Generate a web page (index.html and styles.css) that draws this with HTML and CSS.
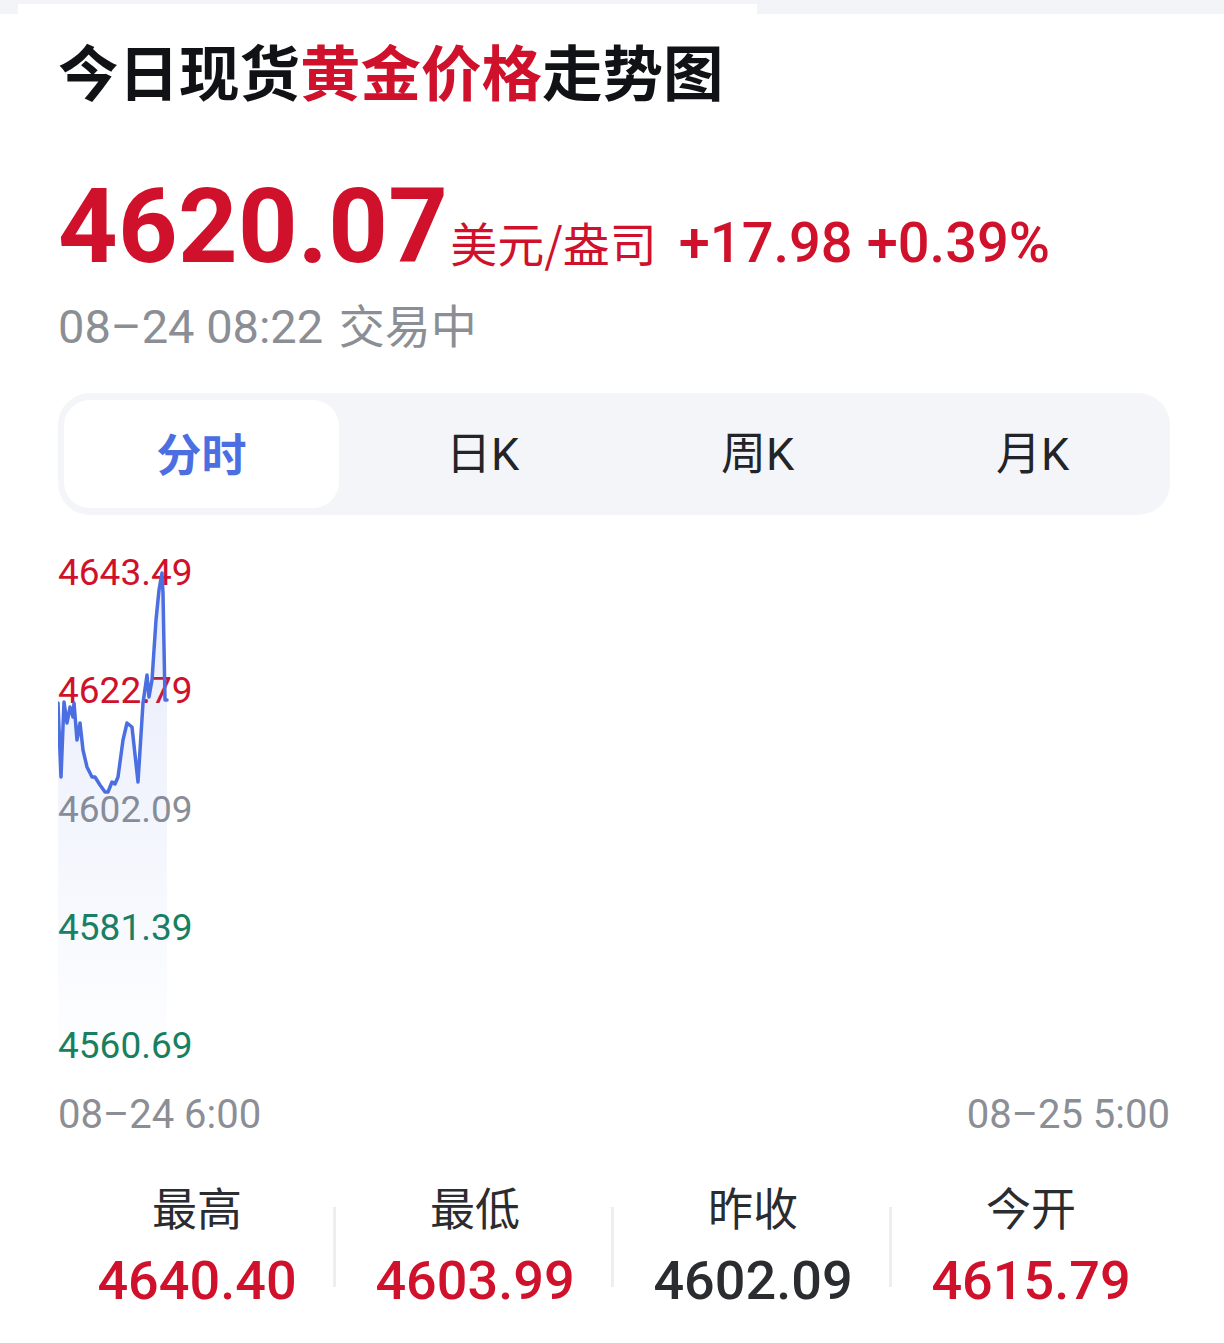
FILE: index.html
```html
<!DOCTYPE html>
<html lang="zh">
<head>
<meta charset="utf-8">
<title>今日现货黄金价格走势图</title>
<link rel="stylesheet" href="styles.css">
</head>
<body>
<div class="strip"><div class="strip-tab"></div></div>
<main class="page">
  <h1 class="title">今日现货<span class="red">黄金价格</span>走势图</h1>
  <div class="price-row">
    <span class="price">4620.07</span>
    <span class="unit">美元/盎司</span>
    <span class="change">+17.98</span>
    <span class="change">+0.39%</span>
  </div>
  <div class="status">08–24 08:22 <span class="cjk">交易中</span></div>

  <div class="tabs">
    <div class="tab active">分时</div>
    <div class="tab">日K</div>
    <div class="tab">周K</div>
    <div class="tab">月K</div>
  </div>

  <div class="chart">
    <div class="y-labels">
      <span class="up">4643.49</span>
      <span class="up">4622.79</span>
      <span class="flat">4602.09</span>
      <span class="down">4581.39</span>
      <span class="down">4560.69</span>
    </div>
    <svg class="chart-svg" viewBox="0 0 1112 517" preserveAspectRatio="none">
      <defs>
        <linearGradient id="fillg" x1="0" y1="0" x2="0" y2="1">
          <stop offset="0" stop-color="#4b6fe0" stop-opacity="0.13"/>
          <stop offset="1" stop-color="#4b6fe0" stop-opacity="0.01"/>
        </linearGradient>
      </defs>
      <path d="M0,152 L3,226 L6,151 L9,172 L12,156 L15,166 L16,152 L19,189 L22,172 L25,199 L29,216 L34,226 L37,226 L42,234 L47,241 L50,241 L54,231 L57,233 L60,226 L65,189 L69,172 L74,176 L80,231 L85,152 L89,124 L91,146 L94,129 L98,69 L101,39 L104,22 L105,42 L107,149 L109,149 L109,490 L0,490 Z" fill="url(#fillg)"/>
      <path d="M0,152 L3,226 L6,151 L9,172 L12,156 L15,166 L16,152 L19,189 L22,172 L25,199 L29,216 L34,226 L37,226 L42,234 L47,241 L50,241 L54,231 L57,233 L60,226 L65,189 L69,172 L74,176 L80,231 L85,152 L89,124 L91,146 L94,129 L98,69 L101,39 L104,22 L105,42 L107,149 L109,149" fill="none" stroke="#4b6fe0" stroke-width="3.5" stroke-linejoin="round" stroke-linecap="round"/>
    </svg>
  </div>

  <div class="x-labels">
    <span>08–24 6:00</span>
    <span>08–25 5:00</span>
  </div>

  <div class="stats">
    <div class="stat">
      <div class="stat-label">最高</div>
      <div class="stat-value red">4640.40</div>
    </div>
    <div class="stat">
      <div class="stat-label">最低</div>
      <div class="stat-value red">4603.99</div>
    </div>
    <div class="stat">
      <div class="stat-label">昨收</div>
      <div class="stat-value dark">4602.09</div>
    </div>
    <div class="stat">
      <div class="stat-label">今开</div>
      <div class="stat-value red">4615.79</div>
    </div>
  </div>
</main>
</body>
</html>
```

FILE: styles.css
```css
* { box-sizing: border-box; }
html, body { margin: 0; padding: 0; background: #fff; }
body {
  font-family: Roboto, "Noto Sans CJK SC", "Noto Sans", sans-serif;
  color: #222428;
  width: 1224px;
}
.strip {
  height: 14px;
  background: #f3f4f7;
  padding: 4px 0 0 18px;
}
.strip-tab {
  width: 739px;
  height: 10px;
  background: #fff;
}
.page {
  padding: 0 54px 0 58px;
}
.red { color: #d0112b; }
.title {
  margin: 18px 0 0 0;
  font-family: "Noto Sans CJK SC", sans-serif;
  font-size: 60.5px;
  line-height: 76px;
  font-weight: 700;
  color: #111215;
  letter-spacing: 0;
}
.price-row {
  display: flex;
  align-items: baseline;
  margin-top: 63px;
  height: 112px;
  line-height: 112px;
}
.price {
  font-family: Roboto, sans-serif;
  font-weight: 700;
  font-size: 104px;
  color: #d0112b;
  letter-spacing: 0.3px;
}
.unit {
  font-family: "Noto Sans CJK SC", sans-serif;
  font-size: 47px;
  color: #d0112b;
  margin-left: 2px;
}
.change {
  font-family: Roboto, sans-serif;
  font-weight: 500;
  font-size: 56px;
  color: #d0112b;
  margin-left: 22px;
}
.change + .change { margin-left: 14px; }
.status {
  margin-top: 10px;
  font-size: 47px;
  line-height: 60px;
  color: #8b8e94;
}
.status .cjk {
  font-family: "Noto Sans CJK SC", sans-serif;
  font-size: 46px;
  margin-left: 4px;
}
.tabs {
  margin-top: 36px;
  height: 122px;
  background: #f4f5f9;
  border-radius: 32px;
  padding: 7px 6px;
  display: grid;
  grid-template-columns: repeat(4, 1fr);
}
.tab {
  display: flex;
  align-items: center;
  justify-content: center;
  padding-bottom: 8px;
  padding-left: 12px;
  font-size: 45px;
  font-family: Roboto, "Noto Sans CJK SC", sans-serif;
  color: #222428;
  border-radius: 26px;
}
.tab.active {
  background: #fff;
  color: #4b6fe0;
  font-weight: 700;
  font-family: "Noto Sans CJK SC", sans-serif;
  padding-left: 0;
  padding-bottom: 4px;
}
.chart {
  position: relative;
  margin-top: 36px;
  height: 517px;
}
.y-labels {
  height: 100%;
  display: flex;
  flex-direction: column;
  justify-content: space-between;
  font-size: 37px;
  line-height: 44px;
}
.y-labels .up { color: #d0112b; }
.y-labels .flat { color: #8b8e94; }
.y-labels .down { color: #17805f; }
.chart-svg {
  position: absolute;
  left: 0;
  top: 0;
  width: 1112px;
  height: 517px;
}
.x-labels {
  display: flex;
  justify-content: space-between;
  margin-top: 22px;
  font-size: 40px;
  line-height: 50px;
  color: #8b8e94;
}
.stats {
  margin-top: 34px;
  display: grid;
  grid-template-columns: repeat(4, 1fr);
}
.stat {
  display: flex;
  flex-direction: column;
  align-items: center;
  position: relative;
}
.stat + .stat::before {
  content: "";
  position: absolute;
  left: -3px;
  top: 33px;
  width: 3px;
  height: 80px;
  background: #eceef1;
}
.stat-label {
  font-family: "Noto Sans CJK SC", sans-serif;
  font-size: 45px;
  line-height: 66px;
  color: #2a2c30;
}
.stat-value {
  margin-top: 4px;
  font-family: Roboto, sans-serif;
  font-size: 54px;
  line-height: 74px;
  font-weight: 500;
}
.stat-value.dark { color: #2a2c30; }
```
